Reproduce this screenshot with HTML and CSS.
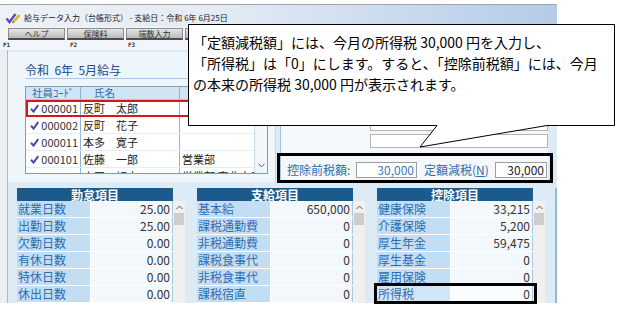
FILE: index.html
```
<!DOCTYPE html>
<html lang="ja">
<head>
<meta charset="utf-8">
<title>給与データ入力</title>
<link rel="stylesheet" href="styles.css">
</head>
<body>
<div class="stage">
  <div class="window">
    <div class="titlebar">
      <svg class="appicon" width="16" height="12" viewBox="0 0 16 12"><path d="M1.5 6.5 L4.5 10 L10.5 2" stroke="#5a48b8" stroke-width="2.4" fill="none"/><path d="M8 10.5 L14.5 3" stroke="#e2b323" stroke-width="2.6"/><path d="M7.5 11 L8.5 9.5" stroke="#555" stroke-width="1.2"/></svg>
      <span class="title">給与データ入力（台帳形式） - 支給日：令和 6年 6月25日</span>
    </div>
    <div class="toolbar">
      <button class="tb">ヘルプ</button>
      <button class="tb">保険料</button>
      <button class="tb">端数入力</button>
      <button class="tb" aria-hidden="true"></button>
      <button class="tb" aria-hidden="true"></button>
      <button class="tb" aria-hidden="true"></button>
      <button class="tb" aria-hidden="true"></button>
    </div>
    <div class="fkeys">
      <span class="fk fk1">F1</span><span class="fk">F2</span><span class="fk">F3</span>
    </div>
    <div class="client">
      <div class="top">
        <section class="lpanel">
          <h2 class="month">令和&nbsp; 6年&nbsp; 5月給与</h2>
          <div class="list">
            <div class="list-body">
              <div class="lrow lhead"><span class="hc1">社員ｺｰﾄﾞ</span><span class="hc2">氏名</span><span></span></div>
              <div class="lrows">
                <div class="lrow sel"><span class="ccode"><svg class="chk" width="9" height="9" viewBox="0 0 9 9"><path d="M1 4.8 L3.6 7.6 L8.2 1.2" stroke="#4c46ad" stroke-width="2" fill="none"/></svg>000001</span><span class="cname">反町　太郎</span><span class="cdept"></span></div>
                <div class="lrow"><span class="ccode"><svg class="chk" width="9" height="9" viewBox="0 0 9 9"><path d="M1 4.8 L3.6 7.6 L8.2 1.2" stroke="#4c46ad" stroke-width="2" fill="none"/></svg>000002</span><span class="cname">反町　花子</span><span class="cdept"></span></div>
                <div class="lrow"><span class="ccode"><svg class="chk" width="9" height="9" viewBox="0 0 9 9"><path d="M1 4.8 L3.6 7.6 L8.2 1.2" stroke="#4c46ad" stroke-width="2" fill="none"/></svg>000011</span><span class="cname">本多　寛子</span><span class="cdept"></span></div>
                <div class="lrow"><span class="ccode"><svg class="chk" width="9" height="9" viewBox="0 0 9 9"><path d="M1 4.8 L3.6 7.6 L8.2 1.2" stroke="#4c46ad" stroke-width="2" fill="none"/></svg>000101</span><span class="cname">佐藤　一郎</span><span class="cdept">営業部</span></div>
                <div class="lrow"><span class="ccode"><svg class="chk" width="9" height="9" viewBox="0 0 9 9"><path d="M1 4.8 L3.6 7.6 L8.2 1.2" stroke="#4c46ad" stroke-width="2" fill="none"/></svg>000102</span><span class="cname">山田　紀夫</span><span class="cdept">営業部 東北支店</span></div>
              </div>
            </div>
            <div class="list-scroll"><svg width="7" height="5" viewBox="0 0 7 5"><path d="M0.5 0.8 L3.5 3.8 L6.5 0.8" stroke="#555" stroke-width="1" fill="none"/></svg></div>
          </div>
        </section>
        <section class="rpanel">
          <div class="ibox"></div>
          <div class="ibox"></div>
          <div class="taxrow">
            <span class="tlabel">控除前税額:</span>
            <span class="tbox tbox1">30,000</span>
            <span class="tlabel2">定額減税(<u>N</u>)</span>
            <span class="tbox tbox2">30,000</span>
          </div>
        </section>
      </div>
      <div class="tables">
        <div class="tbl">
          <div class="thead">勤怠項目</div>
          <div class="tbody">
            <div class="trow"><span class="tl">就業日数</span><span class="tv">25.00</span></div>
            <div class="trow"><span class="tl">出勤日数</span><span class="tv">25.00</span></div>
            <div class="trow"><span class="tl">欠勤日数</span><span class="tv">0.00</span></div>
            <div class="trow"><span class="tl">有休日数</span><span class="tv">0.00</span></div>
            <div class="trow"><span class="tl">特休日数</span><span class="tv">0.00</span></div>
            <div class="trow"><span class="tl">休出日数</span><span class="tv">0.00</span></div>
          </div>
          <div class="tscroll"><svg class="up" width="7" height="5" viewBox="0 0 7 5"><path d="M0.5 4 L3.5 1 L6.5 4" stroke="#555" stroke-width="1" fill="none"/></svg><div class="thumb"></div></div>
        </div>
        <div class="tbl">
          <div class="thead">支給項目</div>
          <div class="tbody">
            <div class="trow"><span class="tl">基本給</span><span class="tv">650,000</span></div>
            <div class="trow"><span class="tl">課税通勤費</span><span class="tv">0</span></div>
            <div class="trow"><span class="tl">非税通勤費</span><span class="tv">0</span></div>
            <div class="trow"><span class="tl">課税食事代</span><span class="tv">0</span></div>
            <div class="trow"><span class="tl">非税食事代</span><span class="tv">0</span></div>
            <div class="trow"><span class="tl">課税宿直</span><span class="tv">0</span></div>
          </div>
          <div class="tscroll"><svg class="up" width="7" height="5" viewBox="0 0 7 5"><path d="M0.5 4 L3.5 1 L6.5 4" stroke="#555" stroke-width="1" fill="none"/></svg><div class="thumb"></div></div>
        </div>
        <div class="tbl">
          <div class="thead">控除項目</div>
          <div class="tbody">
            <div class="trow"><span class="tl">健康保険</span><span class="tv">33,215</span></div>
            <div class="trow"><span class="tl">介護保険</span><span class="tv">5,200</span></div>
            <div class="trow"><span class="tl">厚生年金</span><span class="tv">59,475</span></div>
            <div class="trow"><span class="tl">厚生基金</span><span class="tv">0</span></div>
            <div class="trow"><span class="tl">雇用保険</span><span class="tv">0</span></div>
            <div class="trow hl"><span class="tl">所得税</span><span class="tv">0</span></div>
          </div>
          <div class="tscroll"><svg class="up" width="7" height="5" viewBox="0 0 7 5"><path d="M0.5 4 L3.5 1 L6.5 4" stroke="#555" stroke-width="1" fill="none"/></svg><div class="thumb"></div></div>
        </div>
        <div class="tbl-edge"></div>
      </div>
    </div>
  </div>

  <div class="mark mark-tax"></div>
  <div class="mark mark-shotoku"></div>

  <div class="callout">
    <svg class="callout-shape" width="428" height="125" viewBox="0 0 428 125"><path d="M0.5 0.5 H426.5 V101.5 H359 L232 123 L249 101.5 H0.5 Z" fill="#fff" stroke="#000" stroke-width="1"/></svg>
    <p class="callout-text">「定額減税額」には、今月の所得税 30,000 円を入力し、<br>「所得税」は「0」にします。すると、「控除前税額」には、今月<br>の本来の所得税 30,000 円が表示されます。</p>
  </div>
</div>
</body>
</html>
```
FILE: styles.css
```
* { box-sizing: border-box; margin: 0; padding: 0; }
body { margin: 0; background: #fff; font-family: "Noto Sans CJK JP", "Noto Sans", sans-serif; }
.stage { position: relative; width: 635px; height: 321px; overflow: hidden; }

.window { margin-top: 4px; width: 557px; height: 299px; border-top: 1px solid #a3a3a3; background: #eceff2; overflow: hidden; display: flex; flex-direction: column; }

.titlebar { height: 22px; flex: none; display: flex; align-items: center; gap: 3px; padding: 4px 0 0 5px; background: linear-gradient(to right, #eef2f7 0%, #e3ebf4 40%, #b3cbe8 100%); }
.title { font-size: 8px; line-height: 10px; color: #1a1a1a; white-space: nowrap; }

.toolbar { height: 13px; flex: none; display: flex; gap: 2px; padding: 1px 0 0 8px; background: #f2f6fa; }
.tb { flex: none; width: 57px; height: 12px; font-family: "Noto Sans CJK JP", sans-serif; font-size: 8px; line-height: 9px; color: #333; background: linear-gradient(#e6e6e6, #bababa); border: 1px solid #8c8c8c; border-bottom: 2px solid #4d4d4d; }

.fkeys { height: 10px; flex: none; display: flex; padding-left: 3px; background: #f2f6fa; font-family: "DejaVu Sans Mono", monospace; font-size: 6px; line-height: 10px; font-weight: bold; color: #333; }
.fk { flex: none; width: 58px; }
.fk1 { width: 67px; }

.client { flex: 1; margin-left: 7px; border-left: 1px solid #a4bccf; background: #dcebf6; display: flex; flex-direction: column; }

.top { height: 132px; flex: none; display: flex; gap: 4px; padding-top: 2px; }

.lpanel { width: 268px; flex: none; background: #eef5fb; border-right: 1px solid #c5d9ea; padding: 11px 0 0 17px; }
.month { width: 243px; height: 16px; font-size: 12px; font-weight: normal; line-height: 14px; color: #1e4b88; border-bottom: 1px solid #a9c9e4; white-space: nowrap; }

.list { margin-top: 7px; width: 243px; height: 88px; border: 1px solid #7f9db9; background: #fff; display: flex; }
.list-body { width: 228px; flex: none; }
.lrows { height: 73px; overflow: hidden; }
.lrow { display: grid; grid-template-columns: 55px 99px 74px; height: 17px; font-size: 11px; line-height: 16px; color: #222; border-bottom: 1px solid #e4eef7; }
.lrow > span { white-space: nowrap; overflow: hidden; }
.lrow > span:nth-child(1), .lrow > span:nth-child(2) { border-right: 1px solid #8fb4d6; }
.lhead { height: 13px; line-height: 12px; font-size: 10.5px; background: #cfe4f5; color: #2f6eac; border-bottom: 1px solid #a9c7e2; }
.lhead > span { overflow: visible; }
.hc1 { text-align: center; }
.hc2 { padding-left: 13px; }
.sel { outline: 2px solid #d8141c; outline-offset: -2px; }
.ccode { display: flex; align-items: center; justify-content: space-between; padding: 0 2px 0 4px; color: #333; }
.chk { flex: none; }
.cname { padding-left: 2px; }
.cdept { padding-left: 2px; }
.list-scroll { width: 13px; flex: none; border-left: 1px solid #c9d9e6; background: #f3f6f9; display: flex; flex-direction: column; justify-content: flex-end; align-items: center; padding-bottom: 5px; }

.rpanel { width: 268px; flex: none; background: #f4f8fb; border-left: 1px solid #a9c3d9; padding-top: 65px; display: flex; flex-direction: column; align-items: flex-end; gap: 3px; }
.ibox { width: 178px; height: 14px; background: #fff; border: 1px solid #b4b4b4; }
.taxrow { align-self: stretch; margin-top: 11px; height: 16px; display: flex; align-items: center; padding-left: 6px; font-size: 12px; white-space: nowrap; }
.tlabel { width: 69px; flex: none; color: #2e6cae; line-height: 16px; }
.tlabel2 { width: 71px; flex: none; margin-left: 7px; color: #2e6cae; line-height: 16px; }
.tbox { flex: none; height: 16px; border: 1px solid #9d9d9d; background: #fff; text-align: right; padding-right: 2px; line-height: 14px; }
.tbox1 { width: 61px; color: #3b7bbb; }
.tbox2 { width: 52px; color: #222; }

.tables { display: flex; gap: 12px; padding-left: 9px; margin-top: 6px; height: 115px; flex: none; }
.tbl { width: 168px; flex: none; display: grid; grid-template-columns: 156px 12px; grid-template-rows: 13px 102px; }
.thead { grid-column: 1; grid-row: 1; background: #1b5a8b; color: #fff; font-size: 12px; font-weight: bold; line-height: 13px; text-align: center; }
.tbody { grid-column: 1; grid-row: 2; }
.trow { display: grid; grid-template-columns: 74px 82px; height: 17px; border-bottom: 1px solid #fff; font-size: 12px; line-height: 16px; }
.tl { background: #c3def3; color: #2c6db2; padding-left: 1px; border-right: 1px solid #fff; white-space: nowrap; }
.tv { background: #f3f8fc; color: #333; text-align: right; padding-right: 2px; border-right: 1px solid #a9c8e2; }
.hl .tl { background: #d0e6f6; }
.hl .tv { background: #fafdff; }
.tscroll { grid-column: 2; grid-row: 2; background: #f0f0f0; display: flex; flex-direction: column; align-items: center; padding-top: 4px; }
.thumb { width: 10px; height: 12px; margin-top: 3px; background: #cdcdcd; }
.tbl-edge { flex: none; width: 10px; margin-left: -2px; border-left: 2px solid #97b8d4; }

.mark { position: absolute; border: 3px solid #000; }
.mark-tax { left: 277px; top: 153px; width: 276px; height: 30px; }
.mark-shotoku { left: 374px; top: 283px; width: 163px; height: 21px; }

.callout { position: absolute; left: 188px; top: 24px; width: 428px; height: 125px; }
.callout-shape { position: absolute; left: 0; top: 0; }
.callout-text { position: relative; padding: 8px 0 0 5px; font-size: 14px; line-height: 21px; color: #000; white-space: nowrap; }
```
